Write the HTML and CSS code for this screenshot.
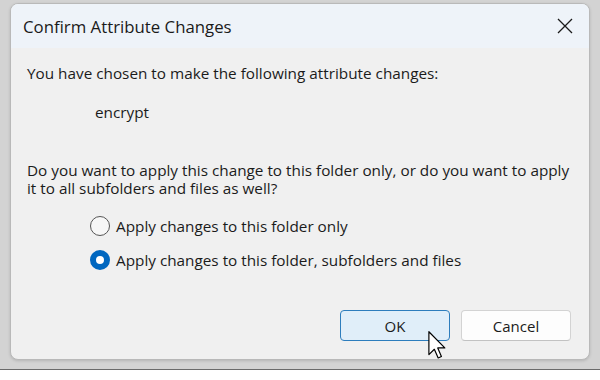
FILE: index.html
```html
<!DOCTYPE html>
<html lang="en">
<head>
<meta charset="utf-8">
<title>Confirm Attribute Changes</title>
<link rel="stylesheet" href="styles.css">
</head>
<body>
<div class="frame">
  <div class="dialog">
    <div class="titlebar">
      <span class="title">Confirm Attribute Changes</span>
      <svg class="close" width="16" height="16" viewBox="0 0 16 16"><path d="M1 1 L15 15 M15 1 L1 15" stroke="#1a1a1a" stroke-width="1.3" fill="none"/></svg>
    </div>
    <div class="content">
      <p class="line">You have chosen to make the following attribute changes:</p>
      <p class="line attr">encrypt</p>
      <p class="question">Do you want to apply this change to this folder only, or do you want to apply it to all subfolders and files as well?</p>
      <div class="options">
        <label class="option"><span class="radio"></span><span>Apply changes to this folder only</span></label>
        <label class="option"><span class="radio checked"></span><span>Apply changes to this folder, subfolders and files</span></label>
      </div>
      <div class="buttons">
        <button class="btn primary">OK</button>
        <button class="btn">Cancel</button>
      </div>
    </div>
    <svg class="cursor" width="18" height="28" viewBox="0 0 12 19"><path d="M0.5 0.5 L0.5 16 L4.2 12.4 L6.8 18.3 L9 17.3 L6.5 11.5 L11.3 11.5 Z" fill="#fff" stroke="#000" stroke-width="0.8" stroke-linejoin="round"/></svg>
  </div>
</div>
</body>
</html>
```
FILE: styles.css
```css
* { box-sizing: border-box; }
html, body { margin: 0; padding: 0; background: #ffffff; }
body { font-family: "Open Sans", "Noto Sans", sans-serif; color: #1b1b1b; }
.frame {
  width: 600px;
  height: 370px;
  background: #d3d3d3;
  border-bottom: 1px solid #6a6a6a;
  padding: 3px 10px 0 10px;
}
.dialog {
  position: relative;
  height: 357px;
  background: #f0f0f0;
  border: 1px solid #b9b9b9;
  border-radius: 8px;
  overflow: hidden;
  box-shadow: 0 1px 3px rgba(0,0,0,0.15);
}
.titlebar {
  height: 44px;
  background: #eef3f9;
  display: flex;
  align-items: center;
  justify-content: space-between;
  padding: 0 16px 0 12px;
}
.title { font-size: 16.8px; color: #1a1a1a; }
.close { display: block; }
.content { padding: 16px 17px 0 16px; font-size: 15.3px; }
.line { margin: 0; line-height: 19px; }
.attr { margin-top: 20px; padding-left: 68px; }
.question { margin: 39px 0 0 0; line-height: 18px; width: 552px; }
.options { margin-top: 17px; padding-left: 63px; display: flex; flex-direction: column; gap: 10px; }
.option { display: flex; align-items: center; gap: 6px; height: 24px; }
.radio {
  width: 20px; height: 20px; border-radius: 50%;
  border: 1px solid #555;
  background: #f7f7f7;
  flex: none;
}
.radio.checked {
  border: 6px solid #0067c0;
  background: #ffffff;
}
.buttons { display: flex; justify-content: flex-end; gap: 11px; margin-top: 38px; padding-right: 1px; }
.btn {
  width: 110px; height: 31px;
  font-family: inherit; font-size: 15px; color: #1b1b1b;
  background: #fdfdfd;
  border: 1px solid #d3d3d3;
  border-bottom-color: #c2c2c2;
  border-radius: 4px;
}
.btn.primary {
  background: #e0eef9;
  border-color: #2d7dbd;
}
.cursor { position: absolute; left: 417px; top: 327px; }
```
